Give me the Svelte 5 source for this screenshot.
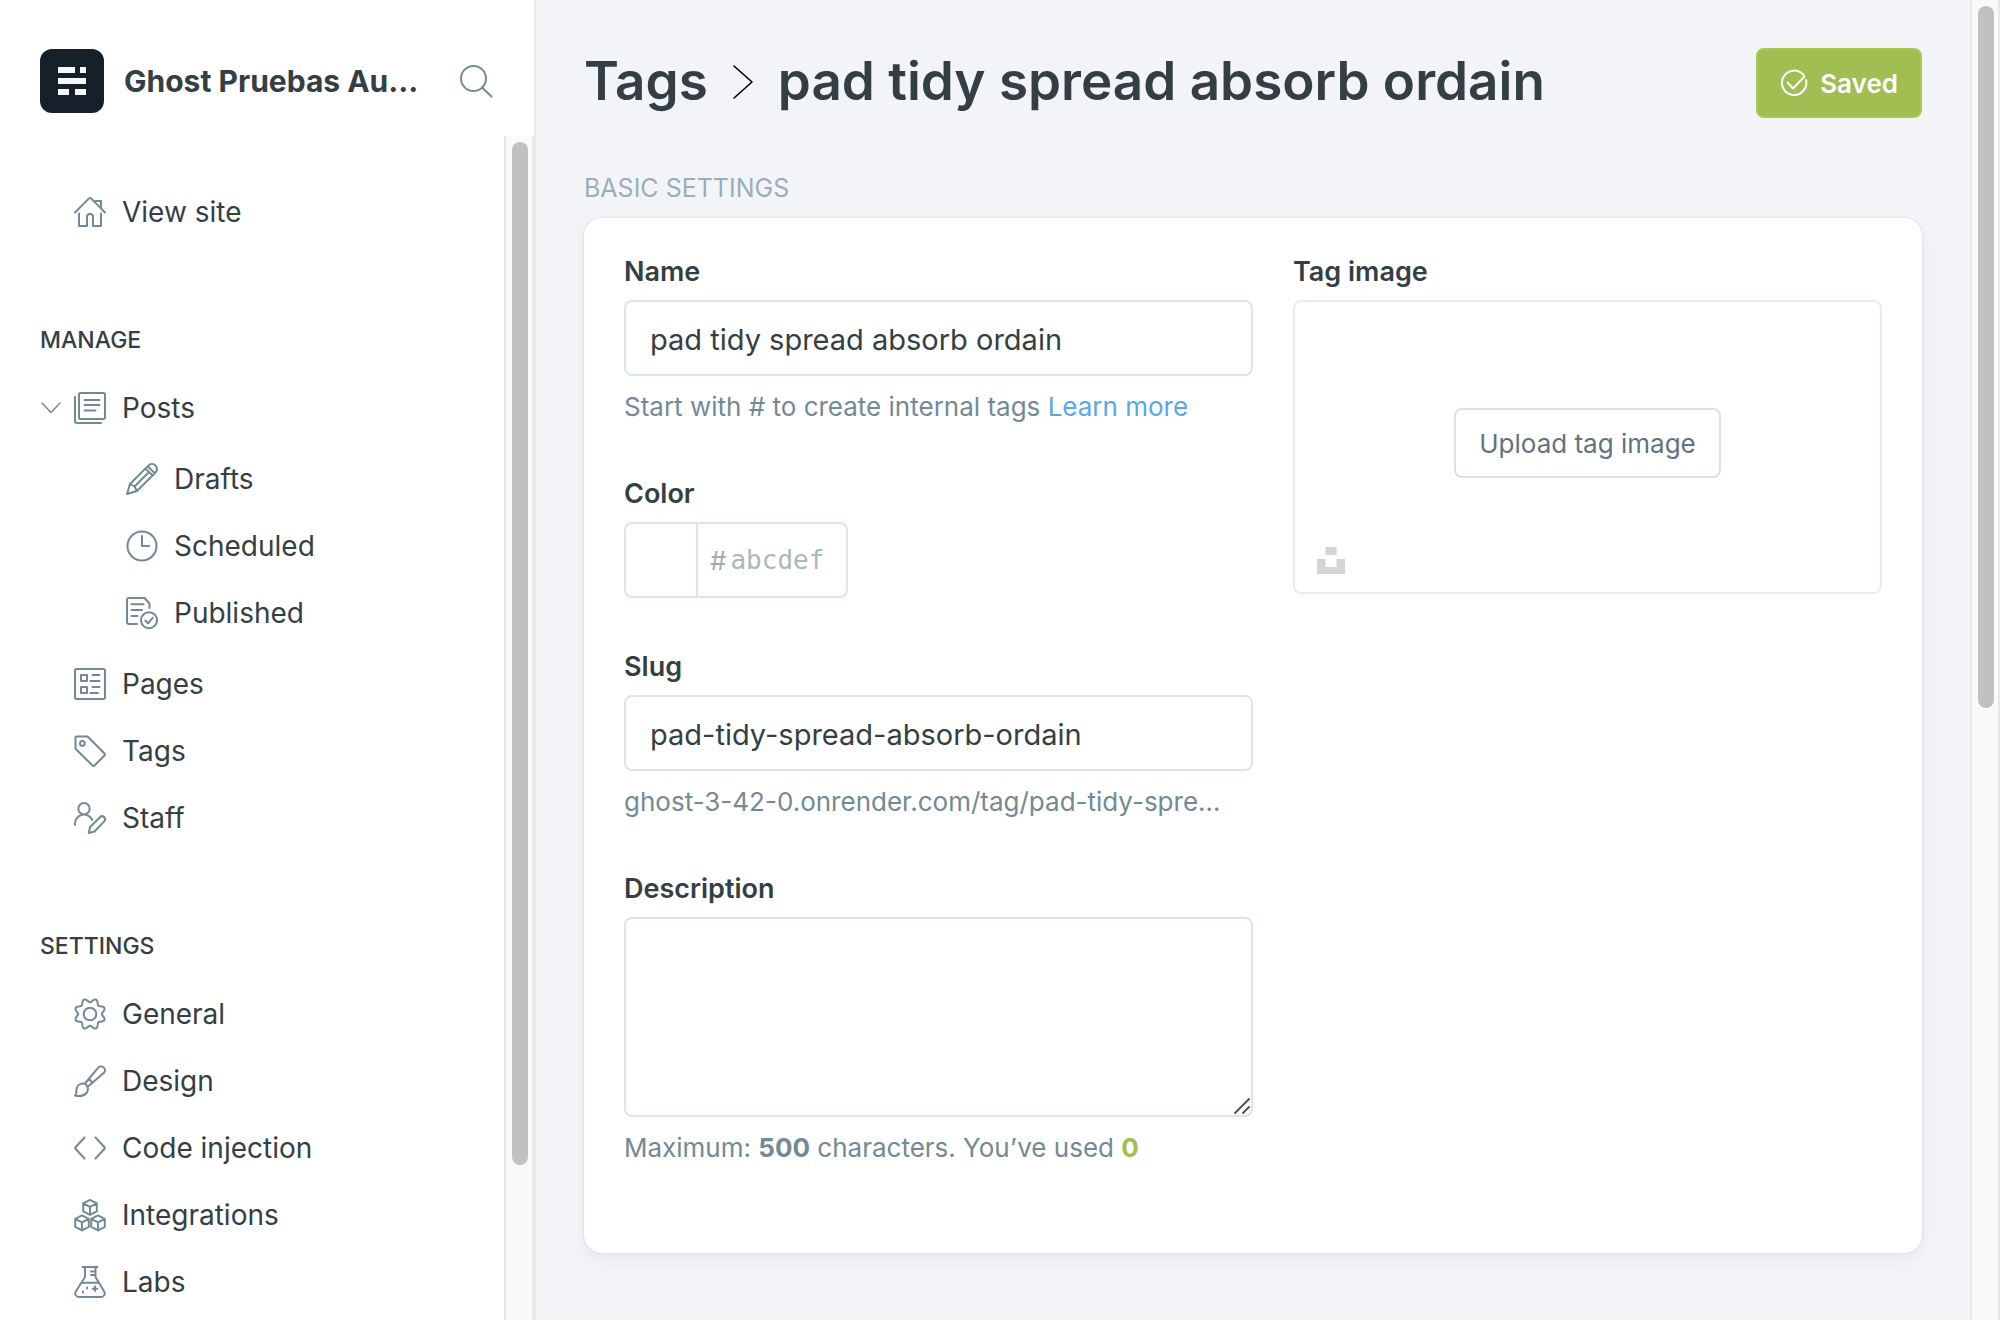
<script>
  let name = $state('pad tidy spread absorb ordain');
  let slug = $state('pad-tidy-spread-absorb-ordain');
  let color = $state('');
  let description = $state('');

  // Closed wavy outline with eight lobes for the settings gear.
  const gear =
    'M' +
    Array.from({ length: 96 }, (_, i) => {
      const t = (i / 96) * Math.PI * 2;
      const r = 13.7 - 1.9 * Math.cos(8 * t);
      return `${(16 + r * Math.cos(t)).toFixed(2)} ${(16 + r * Math.sin(t)).toFixed(2)}`;
    }).join('L') +
    'Z';

  const cube = (x, y) =>
    `M${x} ${y - 7.6}l6.8 3.4v8L${x} ${y + 7.4}l-6.8-3.6v-8zM${x - 6.8} ${y - 4.2}L${x} ${y - 0.6}l6.8-3.6M${x} ${y - 0.6}v8`;

  const icons = {
    home: 'M1 16.5L15 2.4a1.4 1.4 0 0 1 2 0L31 16.5M21.5 5H27v7.5M5 17.5V30h8v-9a3 3 0 0 1 6 0v9h8V17.5',
    posts: 'M1 5v24a2 2 0 0 0 2 2h24M6.5 1h23A1.5 1.5 0 0 1 31 2.5v23a1.5 1.5 0 0 1-1.5 1.5h-23A1.5 1.5 0 0 1 5 25.5v-23A1.5 1.5 0 0 1 6.5 1zM10.5 8h15M10.5 13h15M10.5 18.5h11',
    drafts: 'M1 31l3-10L22.5 2.5a4.8 4.8 0 0 1 7 7L11 28zM19.5 5.5l7 7M22 3.5l6.5 6.5M4 21l4.5 2.5L11 28M8.5 23.5L23 9',
    scheduled: 'M16 1.5a14.5 14.5 0 1 0 0 29a14.5 14.5 0 1 0 0-29zM16 6v10h7',
    published: 'M11 27H3a2 2 0 0 1-2-2V3a2 2 0 0 1 2-2h15.5l5 5.5V11M5.5 7.3h12M5.5 13h10.5M5.5 19h6M23 15.2a8 8 0 1 0 0 16a8 8 0 1 0 0-16zM19.3 23.5l2.7 2.8 4.7-5.5',
    pages: 'M2.5 1h27A1.5 1.5 0 0 1 31 2.5v27a1.5 1.5 0 0 1-1.5 1.5h-27A1.5 1.5 0 0 1 1 29.5v-27A1.5 1.5 0 0 1 2.5 1zM7 7h6v6H7zM7 19h6v6H7zM18.5 7h7M16.5 13h9M18.5 19h7M16.5 25H24',
    tags: 'M2.5 1.5h10.7a1.5 1.5 0 0 1 1 .5l16.3 16.5a1.4 1.4 0 0 1 0 2L20.5 30.5a1.4 1.4 0 0 1-2 0L2 14.2a1.5 1.5 0 0 1-.5-1V2.5a1 1 0 0 1 1-1zM8.4 6a2.4 2.4 0 1 0 0 4.8a2.4 2.4 0 1 0 0-4.8z',
    staff: 'M10 1a5.7 5.7 0 1 0 0 11.4a5.7 5.7 0 1 0 0-11.4zM1 23v-1.5a9 9 0 0 1 17.3-3.5M14.8 31l1.3-6L26 15.2a2.9 2.9 0 0 1 4.2 4.2L20.5 29.5z',
    general: gear + 'M16 9.7a6.3 6.3 0 1 0 0 12.6a6.3 6.3 0 1 0 0-12.6z',
    design: 'M1 30.5c2.5-1.5.5-4.5 2-8a6 6 0 0 1 9-2.8a6 6 0 0 1 .5 8.3c-2.5 3-7.5 3.5-11.5 2.5zM11 18.5L24 2.8a3.9 3.9 0 0 1 6 5L14 21.5M15 14l3.5 3.8',
    code: 'M10.5 5.5L1.5 15.3a1 1 0 0 0 0 1.4l9 9.8M21.5 5.5l9 9.8a1 1 0 0 1 0 1.4l-9 9.8',
    integrations: cube(16, 8.5) + cube(8, 24) + cube(24, 24),
    labs: 'M8.5 1h15M11 1v10L1.8 25.5A3.6 3.6 0 0 0 4.8 31h22.4a3.6 3.6 0 0 0 3-5.5L21.5 11V1M7.5 16.7h17M17 5.5h4M17 9h4M21 20.5v4.5M18.7 22.7h4.6M13 21.5v1M9 25.5v1'
  };

  const manage = [
    { label: 'Pages', icon: 'pages' },
    { label: 'Tags', icon: 'tags' },
    { label: 'Staff', icon: 'staff' }
  ];
  const postViews = [
    { label: 'Drafts', icon: 'drafts' },
    { label: 'Scheduled', icon: 'scheduled' },
    { label: 'Published', icon: 'published' }
  ];
  const settings = [
    { label: 'General', icon: 'general' },
    { label: 'Design', icon: 'design' },
    { label: 'Code injection', icon: 'code' },
    { label: 'Integrations', icon: 'integrations' },
    { label: 'Labs', icon: 'labs' }
  ];
</script>

{#snippet navLink(item)}
  <a class="nav-link" href="#{item.icon}">
    <svg class="icon" viewBox="0 0 32 32" aria-hidden="true"><path d={icons[item.icon]} /></svg>
    {item.label}
  </a>
{/snippet}

<div class="app">
  <aside class="sidebar">
    <header class="brand">
      <svg class="logo" viewBox="0 0 64 64" aria-hidden="true">
        <rect width="64" height="64" rx="12" fill="#15202a" />
        <path fill="#f5f7fa" d="M18 18h17v6H18zM40 18h6v6h-6zM18 29h28v6H18zM18 40h11v6H18zM35 40h11v6H35z" />
      </svg>
      <span class="site-name">Ghost Pruebas Au…</span>
      <button class="search" aria-label="Search">
        <svg class="icon" viewBox="0 0 32 32" aria-hidden="true">
          <circle cx="13.5" cy="13.5" r="12.5" /><path d="M22 22.5l9.5 9" />
        </svg>
      </button>
    </header>

    <div class="nav-area">
      <nav class="nav">
        {@render navLink({ label: 'View site', icon: 'home' })}

        <h2 class="nav-title">Manage</h2>
        <div class="posts">
          <button class="toggle" aria-label="Collapse posts">
            <svg viewBox="0 0 20 12" aria-hidden="true"><path d="M1 1l9 9.5L19 1" /></svg>
          </button>
          {@render navLink({ label: 'Posts', icon: 'posts' })}
        </div>
        <div class="sub">
          {#each postViews as item}{@render navLink(item)}{/each}
        </div>
        {#each manage as item}{@render navLink(item)}{/each}

        <h2 class="nav-title">Settings</h2>
        {#each settings as item}{@render navLink(item)}{/each}
      </nav>
      <div class="scrollbar nav-scroll"><div class="thumb"></div></div>
    </div>
  </aside>

  <main class="main">
    <header class="page-head">
      <h1>
        <a href="#tags">Tags</a>
        <svg class="crumb" viewBox="0 0 20 34" aria-hidden="true"><path d="M1 1l18 16L1 33" /></svg>
        <span>pad tidy spread absorb ordain</span>
      </h1>
      <button class="save">
        <svg viewBox="0 0 28 28" aria-hidden="true">
          <path d="M23.5 6A12.2 12.2 0 1 0 26 11M7.5 13.5l5.5 6L24.5 7.5" />
        </svg>
        Saved
      </button>
    </header>

    <h2 class="section-title">Basic settings</h2>
    <section class="card">
      <div class="fields">
        <div class="field">
          <label for="tag-name">Name</label>
          <input id="tag-name" class="control" type="text" bind:value={name} />
          <p>Start with # to create internal tags <a href="#learn">Learn more</a></p>
        </div>
        <div class="field">
          <label for="tag-color">Color</label>
          <div class="color-box">
            <span class="swatch"></span>
            <span class="hash">#</span>
            <input id="tag-color" type="text" placeholder="abcdef" bind:value={color} />
          </div>
        </div>
        <div class="field">
          <label for="tag-slug">Slug</label>
          <input id="tag-slug" class="control" type="text" bind:value={slug} />
          <p>ghost-3-42-0.onrender.com/tag/pad-tidy-spre…</p>
        </div>
        <div class="field">
          <label for="tag-description">Description</label>
          <div class="area">
            <textarea id="tag-description" class="control" bind:value={description}></textarea>
            <svg class="grip" viewBox="0 0 16 16" aria-hidden="true"><path d="M1 15L15 1M9 15l6-6" /></svg>
          </div>
          <p>Maximum: <b>500</b> characters. You’ve used <b class="count">{description.length}</b></p>
        </div>
      </div>

      <div class="image-field">
        <span class="label">Tag image</span>
        <div class="dropzone">
          <button class="upload">Upload tag image</button>
          <button class="unsplash" aria-label="Choose from Unsplash">
            <svg viewBox="0 0 28 27" aria-hidden="true"><path d="M8.5 0h11v8h-11zM0 12h8.5v8h11v-8H28v15H0z" /></svg>
          </button>
        </div>
      </div>
    </section>
  </main>
  <div class="scrollbar page-scroll"><div class="thumb"></div></div>
</div>

<style>
  :global(body) {
    margin: 0;
    background: #f3f4f8;
  }

  .app {
    display: flex;
    height: 100vh;
    overflow: hidden;
    font-family: Inter, 'Liberation Sans', sans-serif;
    font-size: 26px;
    color: #343f44;
  }
  .app :is(a, button, input, textarea) {
    font: inherit;
    color: inherit;
    text-decoration: none;
  }
  .app button {
    padding: 0;
    border: 0;
    background: none;
    cursor: pointer;
  }
  svg {
    display: block;
    flex: none;
    fill: none;
    stroke-linecap: round;
    stroke-linejoin: round;
  }
  .icon {
    width: 32px;
    height: 32px;
    overflow: visible;
    stroke: #738a94;
    stroke-width: 2;
  }
  h1,
  h2,
  p {
    margin: 0;
  }

  /* Sidebar */
  .sidebar {
    flex: none;
    display: flex;
    flex-direction: column;
    box-sizing: border-box;
    width: 536px;
    border-right: 2px solid #e5eaed;
    background: #fff;
  }
  .brand {
    flex: none;
    display: flex;
    align-items: center;
    box-sizing: border-box;
    height: 136px;
    padding: 26px 42px 0 40px;
  }
  .logo {
    width: 64px;
    height: 64px;
  }
  .site-name {
    flex: 1;
    min-width: 0;
    margin-left: 20px;
    white-space: nowrap;
    font-size: 30px;
    font-weight: 700;
    line-height: 40px;
  }
  .nav-area {
    flex: 1;
    display: flex;
    min-height: 0;
  }
  .nav {
    flex: 1;
    padding-top: 42px;
    overflow: hidden;
    font-size: 28px;
  }
  .nav-link {
    display: flex;
    align-items: center;
    gap: 16px;
    height: 67px;
    padding-left: 74px;
  }
  .nav-title {
    margin: 81px 0 20px 40px;
    font-size: 23px;
    font-weight: 500;
    line-height: 28px;
    text-transform: uppercase;
  }
  .posts {
    display: flex;
    align-items: center;
    padding-left: 41px;
  }
  .posts .nav-link {
    padding-left: 13px;
  }
  .toggle svg {
    width: 20px;
    height: 12px;
    stroke: #738a94;
    stroke-width: 1.5;
  }
  .sub {
    margin: 4px 0;
  }
  .sub .nav-link {
    padding-left: 126px;
  }

  /* Scroll tracks */
  .scrollbar {
    flex: none;
    box-sizing: border-box;
    width: 30px;
    padding: 6px;
    border: solid #e8e8e8;
    border-width: 0 2px;
    background: #fafafa;
  }
  .thumb {
    width: 16px;
    border-radius: 8px;
    background: #c1c1c1;
  }
  .nav-scroll .thumb {
    height: 87.3%;
  }
  .page-scroll .thumb {
    height: 53.7%;
  }

  /* Page */
  .main {
    flex: 1;
    min-width: 0;
    padding: 48px 48px 0;
  }
  .page-head {
    display: flex;
    justify-content: space-between;
    align-items: flex-start;
    margin-bottom: 56px;
  }
  h1 {
    display: flex;
    align-items: center;
    gap: 25px;
    font-size: 53px;
    font-weight: 600;
    line-height: 67px;
  }
  .crumb {
    width: 20px;
    height: 34px;
    stroke: #000;
    stroke-width: 1.6;
  }
  .page-head .save {
    display: flex;
    align-items: center;
    gap: 12px;
    height: 70px;
    padding: 0 22px;
    border: 2px solid #a6c954;
    border-radius: 8px;
    background: #a0be52;
    color: #fff;
    font-weight: 600;
  }
  .save svg {
    width: 28px;
    height: 28px;
    stroke: #fff;
    stroke-width: 2;
  }
  .section-title {
    margin-bottom: 16px;
    color: #9baeb8;
    font-size: 25px;
    font-weight: 400;
    line-height: 28px;
    text-transform: uppercase;
  }
  .card {
    display: grid;
    grid-template-columns: minmax(0, 1fr) minmax(0, 1fr);
    padding: 40px 40px 32px;
    border-radius: 18px;
    background: #fff;
    box-shadow: 0 0 2px rgba(0, 0, 0, 0.15), 0 6px 16px rgba(30, 40, 70, 0.06);
  }
  .field {
    margin-bottom: 55px;
  }
  label,
  .label {
    display: block;
    margin-bottom: 14px;
    font-size: 27px;
    font-weight: 600;
    line-height: 28px;
  }
  .field .control {
    display: block;
    box-sizing: border-box;
    width: 100%;
    height: 76px;
    padding: 2px 24px 0;
    border: 2px solid #dae5ec;
    border-radius: 8px;
    outline: 0;
    background: #fff;
    font-size: 29px;
  }
  .field textarea.control {
    height: 200px;
    padding: 16px 24px;
    resize: none;
  }
  .area {
    position: relative;
  }
  .grip {
    position: absolute;
    right: 3px;
    bottom: 3px;
    width: 16px;
    height: 16px;
    stroke: #555;
    stroke-width: 2;
    pointer-events: none;
  }
  p {
    margin-top: 12px;
    overflow: hidden;
    color: #738a94;
    line-height: 37px;
    text-overflow: ellipsis;
    white-space: nowrap;
  }
  .app p a {
    color: #55a9e8;
  }
  p b {
    font-weight: 700;
  }
  .count {
    color: #a0be52;
  }
  .color-box {
    display: flex;
    align-items: center;
    box-sizing: border-box;
    width: 224px;
    height: 76px;
    border: 2px solid #dae5ec;
    border-radius: 8px;
    overflow: hidden;
    color: #9baeb8;
  }
  .swatch {
    align-self: stretch;
    width: 70px;
    border-right: 2px solid #dae5ec;
  }
  .hash {
    padding: 0 4px 0 12px;
  }
  .color-box input {
    flex: 1;
    min-width: 0;
    padding: 0;
    border: 0;
    outline: 0;
    background: none;
    font-family: 'DejaVu Sans Mono', monospace;
  }
  .color-box input::placeholder {
    color: #a9b8c0;
  }
  .image-field {
    padding-left: 40px;
  }
  .dropzone {
    position: relative;
    display: flex;
    align-items: center;
    justify-content: center;
    box-sizing: border-box;
    height: 294px;
    padding-bottom: 8px;
    border: 2px solid #e6eef5;
    border-radius: 8px;
  }
  .dropzone .upload {
    height: 70px;
    padding: 0 23px;
    border: 2px solid #d8e1e6;
    border-radius: 8px;
    color: #5f747e;
  }
  .unsplash {
    position: absolute;
    left: 22px;
    bottom: 18px;
  }
  .unsplash svg {
    width: 28px;
    height: 27px;
    fill: #d4d4d4;
  }
</style>
